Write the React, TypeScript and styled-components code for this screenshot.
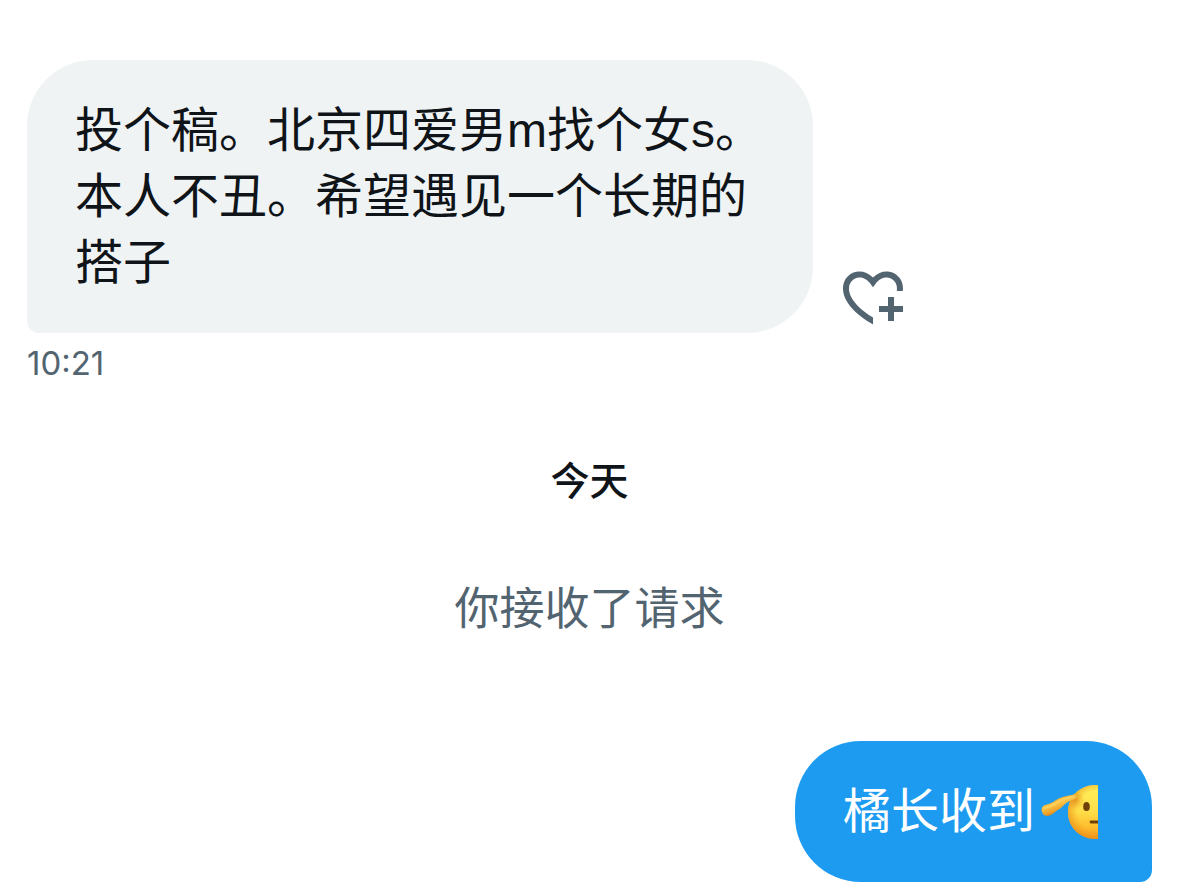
import React from 'react';
import styled, { createGlobalStyle } from 'styled-components';

const GlobalStyle = createGlobalStyle`
  * { box-sizing: border-box; }
  body {
    margin: 0;
    background: #ffffff;
    color: #0f1419;
    font-family: Inter, "Noto Sans CJK SC", sans-serif;
  }
`;

const Conversation = styled.main`
  display: flex;
  flex-direction: column;
  padding: 60px 27px 4px;
`;

const MessageRow = styled.div<{ $own?: boolean }>`
  display: flex;
  align-items: flex-end;
  justify-content: ${({ $own }) => ($own ? 'flex-end' : 'flex-start')};
  gap: 24px;
`;

const Bubble = styled.p<{ $own?: boolean }>`
  display: flex;
  align-items: center;
  max-width: calc(100% * 2 / 3 + 36px);
  margin: 0;
  padding: ${({ $own }) => ($own ? '38px 48px 37px' : '38px 40px 37px 48px')};
  border-radius: ${({ $own }) => ($own ? '66px 66px 12px 66px' : '66px 66px 66px 12px')};
  background: ${({ $own }) => ($own ? '#1d9bf0' : '#eff3f4')};
  color: ${({ $own }) => ($own ? '#ffffff' : '#0f1419')};
  font-family: "Liberation Sans", "Noto Sans CJK SC", sans-serif;
  font-size: 48px;
  line-height: 66px;
`;

const ReactButton = styled.button`
  flex: none;
  display: flex;
  padding: 0;
  border: 0;
  background: none;
  color: #536471;
  cursor: pointer;
`;

const Time = styled.time`
  margin-top: 8px;
  color: #536471;
  font-size: 33px;
  line-height: 44px;
`;

const DayHeading = styled.h2`
  margin: 70px 0 0;
  font-size: 39px;
  font-weight: 500;
  line-height: 52px;
  text-align: center;
`;

const Notice = styled.p`
  margin: 72px 0 102px;
  color: #536471;
  font-size: 45px;
  line-height: 60px;
  text-align: center;
`;

const Emoji = styled.svg`
  flex: none;
  margin: 0 6px;
`;

const HeartPlusIcon = () => (
  <svg width="72" height="72" viewBox="0 0 24 24" fill="currentColor" aria-hidden="true">
    <path d="M17 12v3h-2.998v2h3v3h2v-3h3v-2h-3v-3H17zm-5 6.839c-3.871-2.34-6.053-4.639-7.127-6.609-1.112-2.04-1.031-3.7-.479-4.82.561-1.13 1.667-1.84 2.91-1.91 1.222-.06 2.68.51 3.892 2.16l.806 1.09.805-1.09c1.211-1.65 2.668-2.22 3.89-2.16 1.242.07 2.347.78 2.908 1.91.334.677.49 1.554.321 2.59h2.011c.153-1.283-.039-2.469-.539-3.48-.887-1.79-2.647-2.91-4.601-3.01-1.65-.09-3.367.56-4.796 2.01-1.43-1.45-3.147-2.1-4.798-2.01-1.954.1-3.714 1.22-4.601 3.01-.896 1.81-.846 4.17.514 6.67 1.353 2.48 4.003 5.12 8.382 7.67l.502.299v-2.32z" />
  </svg>
);

const SaluteEmoji = () => (
  <Emoji width="57" height="56" viewBox="0 0 57 56" role="img" aria-label="敬礼">
    <defs>
      <linearGradient id="face" x1="0" y1="0" x2="0" y2="1">
        <stop offset="0" stopColor="#fff05a" />
        <stop offset="0.5" stopColor="#fedd48" />
        <stop offset="0.8" stopColor="#fdbb2c" />
        <stop offset="1" stopColor="#f0941b" />
      </linearGradient>
      <radialGradient id="rim" gradientUnits="userSpaceOnUse" cx="57" cy="27" r="31">
        <stop offset="0.65" stopColor="#f39a1c" stopOpacity="0" />
        <stop offset="1" stopColor="#e98a16" stopOpacity="0.7" />
      </radialGradient>
      <radialGradient id="shade" gradientUnits="userSpaceOnUse" cx="34" cy="16" r="10">
        <stop offset="0" stopColor="#d97812" stopOpacity="0.6" />
        <stop offset="1" stopColor="#e98a16" stopOpacity="0" />
      </radialGradient>
      <linearGradient id="hand" gradientUnits="userSpaceOnUse" x1="15" y1="12" x2="21" y2="29">
        <stop offset="0" stopColor="#f2a72a" />
        <stop offset="0.4" stopColor="#fbc64a" />
        <stop offset="0.75" stopColor="#eda12a" />
        <stop offset="1" stopColor="#c97612" />
      </linearGradient>
    </defs>
    <path d="M57 1H53C38 2 27 13 27 28S38 54 53 55H57Z" fill="url(#face)" />
    <path d="M57 1H53C38 2 27 13 27 28S38 54 53 55H57Z" fill="url(#rim)" />
    <path d="M57 1H53C38 2 27 13 27 28S38 54 53 55H57Z" fill="url(#shade)" />
    <path d="M1 28C0 25 1 22 4 21C8 20 11 19 15 16C20 13 25 12 31 11C34 10 36 11 35 13C34 16 30 16 27 18C23 20 21 24 17 26C13 28 12 31 7 32C4 32 2 31 1 28Z" fill="url(#hand)" />
    <path d="M4 24C10 23 14 20 18 17C22 15 27 14 32 12.500" fill="none" stroke="#ffdd70" strokeWidth="2" strokeLinecap="round" opacity="0.55" />
    <ellipse cx="45.500" cy="22.500" rx="3.300" ry="4.600" fill="#704008" />
    <path d="M57 38H50" stroke="#704008" strokeWidth="2.800" strokeLinecap="round" />
  </Emoji>
);

export default function App() {
  return (
    <>
      <GlobalStyle />
      <Conversation lang="zh-CN">
        <MessageRow>
          <Bubble>投个稿。北京四爱男m找个女s。本人不丑。希望遇见一个长期的搭子</Bubble>
          <ReactButton type="button" aria-label="添加心情">
            <HeartPlusIcon />
          </ReactButton>
        </MessageRow>
        <Time dateTime="10:21">10:21</Time>
        <DayHeading>今天</DayHeading>
        <Notice>你接收了请求</Notice>
        <MessageRow $own>
          <Bubble $own>
            橘长收到
            <SaluteEmoji />
          </Bubble>
        </MessageRow>
      </Conversation>
    </>
  );
}
